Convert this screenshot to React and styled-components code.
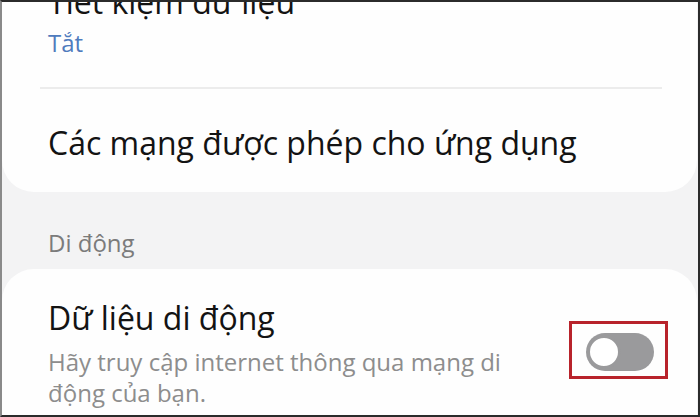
import React, { useState } from 'react'
import styled, { createGlobalStyle } from 'styled-components'

const GlobalStyle = createGlobalStyle`
  html, body {
    margin: 0;
    padding: 0;
    background: #f3f3f4;
  }
  * { box-sizing: border-box; }
`

const Screen = styled.div`
  width: 700px;
  height: 417px;
  overflow: hidden;
  background: #f3f3f4;
  border: 2px solid #2b2b2b;
  border-left-color: #8a8a8a;
  font-family: "Open Sans", "Noto Sans", sans-serif;
  color: #111;
`

const Card = styled.div`
  background: #fefefe;
  border-radius: ${p => p.$top ? '0 0 32px 32px' : '32px 32px 0 0'};
  margin-top: ${p => p.$top ? '-19px' : '0'};
  margin-right: 1px;
`

const Item = styled.div`
  display: flex;
  align-items: center;
  padding: ${p => p.$pad || '0 30px 0 46px'};
`

const TextCol = styled.div`
  flex: 1;
  min-width: 0;
`

const Title = styled.div`
  font-size: 32px;
  line-height: 38px;
  color: #131313;
`

const Sub = styled.div`
  font-size: 24px;
  line-height: ${p => p.$lh || '30px'};
  margin-top: ${p => p.$mt || '0'};
  color: ${p => p.$blue ? '#4f7bbd' : '#8d8d8d'};
`

const Divider = styled.div`
  height: 2px;
  background: #ececec;
  margin: 0 35px 0 38px;
`

const SectionLabel = styled.div`
  font-size: 24px;
  line-height: 30px;
  font-weight: 500;
  color: #7b7b7b;
  padding: 0 46px;
  margin: 36px 0 11px;
`

const Highlight = styled.div`
  border: 3px solid #b8232b;
  padding: 9px 11px 5px 14px;
  margin: 0 0 8px 20px;
`

const Track = styled.button`
  display: flex;
  align-items: center;
  width: 68px;
  height: 38px;
  border: none;
  padding: 0 0 0 1px;
  border-radius: 19px;
  background: #9a9a9c;
  cursor: pointer;
  justify-content: ${p => p.$on ? 'flex-end' : 'flex-start'};
`

const Thumb = styled.span`
  width: 34px;
  height: 34px;
  border-radius: 50%;
  background: #fff;
  border: 3px solid #9a9a9c;
`

export default function App() {
  const [on, setOn] = useState(false)
  return (
    <>
      <GlobalStyle />
      <Screen>
        <Card $top>
          <Item $pad="0 30px 29px 46px">
            <TextCol>
              <Title>Tiết kiệm dữ liệu</Title>
              <Sub $blue $mt="7px">Tắt</Sub>
            </TextCol>
          </Item>
          <Divider />
          <Item $pad="35px 30px 30px 46px">
            <TextCol>
              <Title>Các mạng được phép cho ứng dụng</Title>
            </TextCol>
          </Item>
        </Card>
        <SectionLabel>Di động</SectionLabel>
        <Card>
          <Item $pad="30px 29px 20px 46px">
            <TextCol>
              <Title>Dữ liệu di động</Title>
              <Sub $mt="9px" $lh="31px">Hãy truy cập internet thông qua mạng di động của bạn.</Sub>
            </TextCol>
            <Highlight>
              <Track $on={on} onClick={() => setOn(!on)}>
                <Thumb />
              </Track>
            </Highlight>
          </Item>
        </Card>
      </Screen>
    </>
  )
}
